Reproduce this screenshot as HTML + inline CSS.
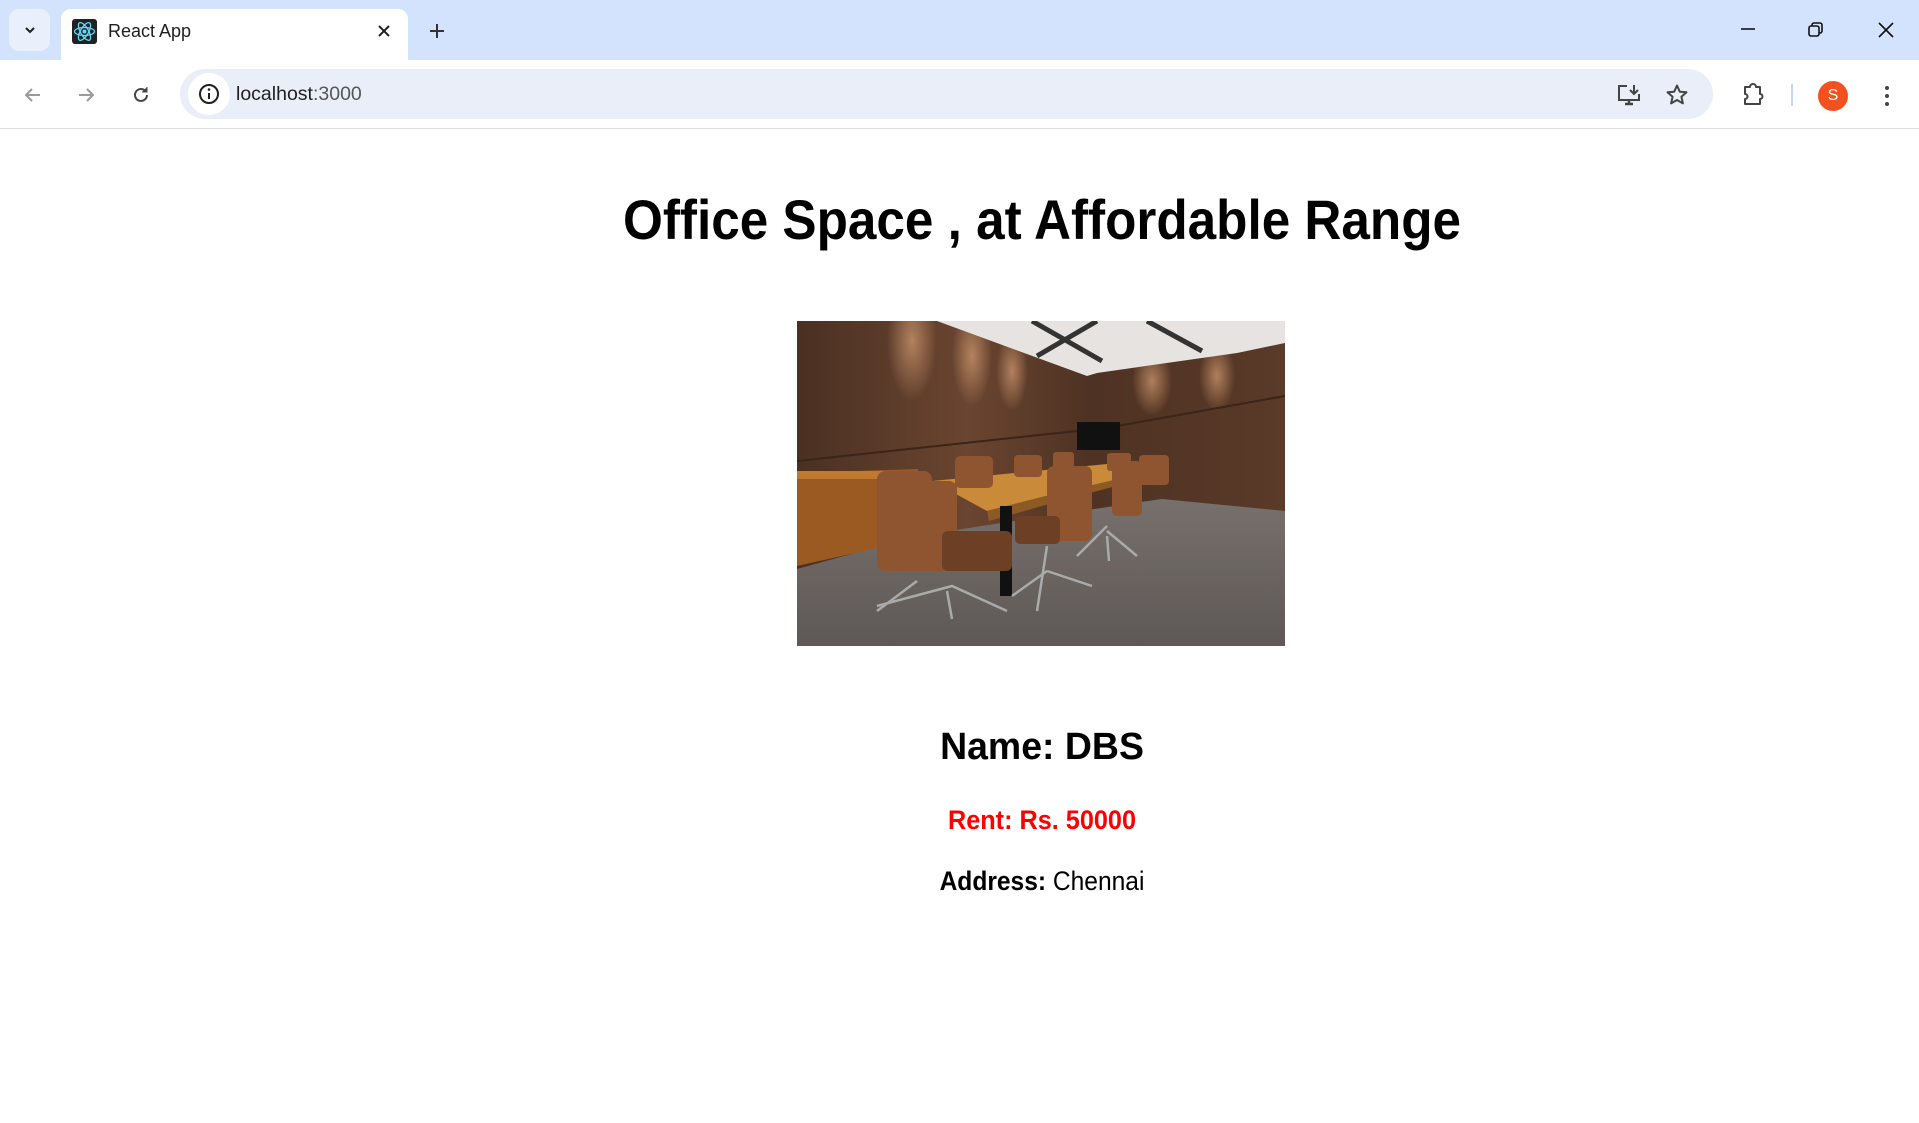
<!DOCTYPE html>
<html><head><meta charset="utf-8"><style>
*{margin:0;padding:0;box-sizing:border-box}
html,body{width:1919px;height:1123px;overflow:hidden;background:#fff;font-family:"Liberation Sans",sans-serif}
.abs{position:absolute}
.t{position:absolute;left:1042px;white-space:nowrap;line-height:1;transform-origin:center top}
</style></head><body>
<div class="abs" style="left:0;top:0;width:1919px;height:60px;background:#d3e3fd"></div>
<div class="abs" style="left:9px;top:9px;width:41px;height:42px;border-radius:10px;background:#e9effb"></div>
<svg class="abs" style="left:22px;top:22px" width="16" height="16" viewBox="0 0 16 16"><path d="M4 6l4 4 4-4" fill="none" stroke="#1f1f1f" stroke-width="2"/></svg>
<div class="abs" style="left:61px;top:9px;width:347px;height:52px;background:#fff;border-radius:10px 10px 0 0"></div>
<div class="abs" style="left:72px;top:19px;width:25px;height:25px;background:#222;border-radius:3px"></div>
<svg class="abs" style="left:72px;top:19px" width="25" height="25" viewBox="0 0 25 25"><g fill="none" stroke="#61dafb" stroke-width="1.3"><ellipse cx="12.5" cy="12.5" rx="10" ry="4"/><ellipse cx="12.5" cy="12.5" rx="10" ry="4" transform="rotate(60 12.5 12.5)"/><ellipse cx="12.5" cy="12.5" rx="10" ry="4" transform="rotate(120 12.5 12.5)"/></g><circle cx="12.5" cy="12.5" r="2" fill="#61dafb"/></svg>
<div class="abs" style="left:108px;top:21px;font-size:18px;color:#1f1f1f">React App</div>
<svg class="abs" style="left:376px;top:23px" width="16" height="16" viewBox="0 0 16 16"><path d="M3 3l10 10M13 3L3 13" stroke="#1f1f1f" stroke-width="2"/></svg>
<svg class="abs" style="left:428px;top:22px" width="18" height="18" viewBox="0 0 18 18"><path d="M9 2v14M2 9h14" stroke="#333" stroke-width="2"/></svg>
<svg class="abs" style="left:1738px;top:20px" width="20" height="20" viewBox="0 0 20 20"><path d="M3 9h14" stroke="#111" stroke-width="1.6"/></svg>
<svg class="abs" style="left:1806px;top:20px" width="20" height="20" viewBox="0 0 20 20"><rect x="3" y="6" width="10" height="10" rx="2" fill="none" stroke="#111" stroke-width="1.6"/><path d="M6 6V5a2 2 0 0 1 2-2h6a2 2 0 0 1 2 2v6a2 2 0 0 1-2 2h-1" fill="none" stroke="#111" stroke-width="1.6"/></svg>
<svg class="abs" style="left:1875px;top:19px" width="22" height="22" viewBox="0 0 22 22"><path d="M4 4l14 14M18 4L4 18" stroke="#111" stroke-width="1.6"/></svg>
<div class="abs" style="left:0;top:60px;width:1919px;height:68px;background:#fff;border-radius:10px 10px 0 0"></div>
<div class="abs" style="left:0;top:128px;width:1919px;height:1px;background:#dadce0"></div>
<svg class="abs" style="left:22px;top:84px" width="22" height="22" viewBox="0 0 22 22"><path d="M18 11H5M10 5l-6 6 6 6" fill="none" stroke="#9a9a9a" stroke-width="2"/></svg>
<svg class="abs" style="left:75px;top:84px" width="22" height="22" viewBox="0 0 22 22"><path d="M4 11h13M12 5l6 6-6 6" fill="none" stroke="#9a9a9a" stroke-width="2"/></svg>
<svg class="abs" style="left:130px;top:84px" width="22" height="22" viewBox="0 0 22 22"><path d="M17 11a6 6 0 1 1-2-4.5" fill="none" stroke="#444" stroke-width="2"/><path d="M17 3v5h-5" fill="#444" stroke="#444" stroke-width="1"/></svg>
<div class="abs" style="left:180px;top:69px;width:1533px;height:50px;border-radius:25px;background:#e9eef8"></div>
<div class="abs" style="left:188px;top:73px;width:42px;height:42px;border-radius:50%;background:#fff"></div>
<svg class="abs" style="left:197px;top:82px" width="24" height="24" viewBox="0 0 24 24"><circle cx="12" cy="12" r="9" fill="none" stroke="#1f1f1f" stroke-width="2"/><path d="M12 11v6" stroke="#1f1f1f" stroke-width="2"/><circle cx="12" cy="7.5" r="1.3" fill="#1f1f1f"/></svg>
<div class="abs" style="left:236px;top:83px;font-size:19.5px;color:#1f1f1f">localhost<span style="color:#555">:3000</span></div>
<svg class="abs" style="left:1616px;top:83px" width="26" height="24" viewBox="0 0 26 24"><path d="M11 3H3v14h20v-6" fill="none" stroke="#444" stroke-width="2"/><path d="M9 21h8M13 17v4" stroke="#444" stroke-width="2.5"/><path d="M18 2v9M14 7l4 4 4-4" fill="none" stroke="#444" stroke-width="2"/></svg>
<svg class="abs" style="left:1665px;top:83px" width="24" height="24" viewBox="0 0 24 24"><path d="M12 2.5l2.8 6.2 6.7.6-5.1 4.5 1.5 6.6L12 17l-5.9 3.4 1.5-6.6-5.1-4.5 6.7-.6z" fill="none" stroke="#444" stroke-width="2" stroke-linejoin="round"/></svg>
<svg class="abs" style="left:1741px;top:83px" width="26" height="24" viewBox="0 0 26 24"><path d="M4 4h5a3 3 0 0 1 6 0h4v7a2.5 2.5 0 0 1 0 5v5H4v-5a2.5 2.5 0 0 0 0-5z" fill="none" stroke="#444" stroke-width="2" stroke-linejoin="round"/></svg>
<div class="abs" style="left:1791px;top:84px;width:2px;height:22px;background:#c7d7f5"></div>
<div class="abs" style="left:1818px;top:81px;width:30px;height:30px;border-radius:50%;background:#f4511e;color:#fff;font-size:16px;text-align:center;line-height:30px">S</div>
<svg class="abs" style="left:1880px;top:84px" width="14" height="24" viewBox="0 0 14 24"><circle cx="7" cy="4" r="2" fill="#444"/><circle cx="7" cy="12" r="2" fill="#444"/><circle cx="7" cy="20" r="2" fill="#444"/></svg>

<div class="t" style="top:192px;font-size:56px;font-weight:bold;transform:translateX(-50%) scaleX(.915)">Office Space , at Affordable Range</div>

<svg class="abs" style="left:797px;top:321px" width="488" height="325" viewBox="0 0 488 325">
<defs>
<linearGradient id="w" x1="0" y1="0" x2="1" y2="0"><stop offset="0" stop-color="#4a3022"/><stop offset=".35" stop-color="#6a4530"/><stop offset=".6" stop-color="#4e3223"/><stop offset="1" stop-color="#5a3a28"/></linearGradient>
<linearGradient id="f" x1="0" y1="0" x2="0" y2="1"><stop offset="0" stop-color="#77706c"/><stop offset="1" stop-color="#5e5856"/></linearGradient>
<radialGradient id="l"><stop offset="0" stop-color="#c8926a" stop-opacity=".8"/><stop offset="1" stop-color="#c8926a" stop-opacity="0"/></radialGradient>
</defs>
<rect width="488" height="325" fill="url(#w)"/>
<ellipse cx="115" cy="20" rx="25" ry="60" fill="url(#l)"/><ellipse cx="175" cy="35" rx="20" ry="50" fill="url(#l)"/><ellipse cx="215" cy="50" rx="16" ry="40" fill="url(#l)"/><ellipse cx="355" cy="60" rx="20" ry="35" fill="url(#l)"/><ellipse cx="420" cy="55" rx="18" ry="35" fill="url(#l)"/>
<polygon points="140,0 488,0 488,22 440,32 300,52 290,55" fill="#e6e3e0"/>
<path d="M235 0l70 40M300 0l-60 35M350 0l55 30" stroke="#333" stroke-width="5"/>
<path d="M0 140l280 -30M320 105l168-30" stroke="#3a2518" stroke-width="2"/>
<polygon points="0,248 120,215 250,195 365,178 488,190 488,325 0,325" fill="url(#f)"/>
<polygon points="0,152 121,148 121,218 0,245" fill="#9a5a22"/>
<rect x="0" y="150" width="121" height="8" fill="#c07a30"/>
<rect x="280" y="101" width="43" height="28" fill="#111"/>
<polygon points="135,160 310,143 370,143 330,156 245,176 190,190" fill="#c98a3a"/>
<polygon points="190,190 245,176 330,156 330,162 245,185 192,200" fill="#8c5a22"/>
<rect x="203" y="185" width="12" height="90" fill="#111"/>
<g fill="#8e5530">
<rect x="158" y="135" width="38" height="32" rx="5"/><rect x="217" y="134" width="28" height="22" rx="4"/><rect x="256" y="131" width="21" height="18" rx="3"/><rect x="310" y="132" width="24" height="18" rx="3"/><rect x="342" y="134" width="30" height="30" rx="4"/>
<rect x="80" y="150" width="55" height="100" rx="8"/><rect x="100" y="160" width="60" height="90" rx="8"/><rect x="250" y="145" width="45" height="75" rx="7"/><rect x="315" y="140" width="30" height="55" rx="5"/>
</g>
<g fill="#6d4025"><rect x="145" y="210" width="70" height="40" rx="6"/><rect x="218" y="195" width="45" height="28" rx="5"/></g>
<g stroke="#aaa" stroke-width="2.5" fill="none"><path d="M80 285l75-20 55 25M120 260l-40 30M150 270l5 28M250 225l-10 65M250 250l45 15M250 250l-35 25M310 205l-30 30M310 210l30 25M310 215l2 25"/></g>
</svg>

<div class="t" style="top:728px;font-size:38px;font-weight:bold;transform:translateX(-50%) scaleX(.985)">Name: DBS</div>
<div class="t" style="top:807px;font-size:27px;font-weight:bold;color:#ff0000;transform:translateX(-50%) scaleX(.935)">Rent: Rs. 50000</div>
<div class="t" style="top:868px;font-size:27px;transform:translateX(-50%) scaleX(.91)"><b>Address:</b> Chennai</div>
</body></html>
